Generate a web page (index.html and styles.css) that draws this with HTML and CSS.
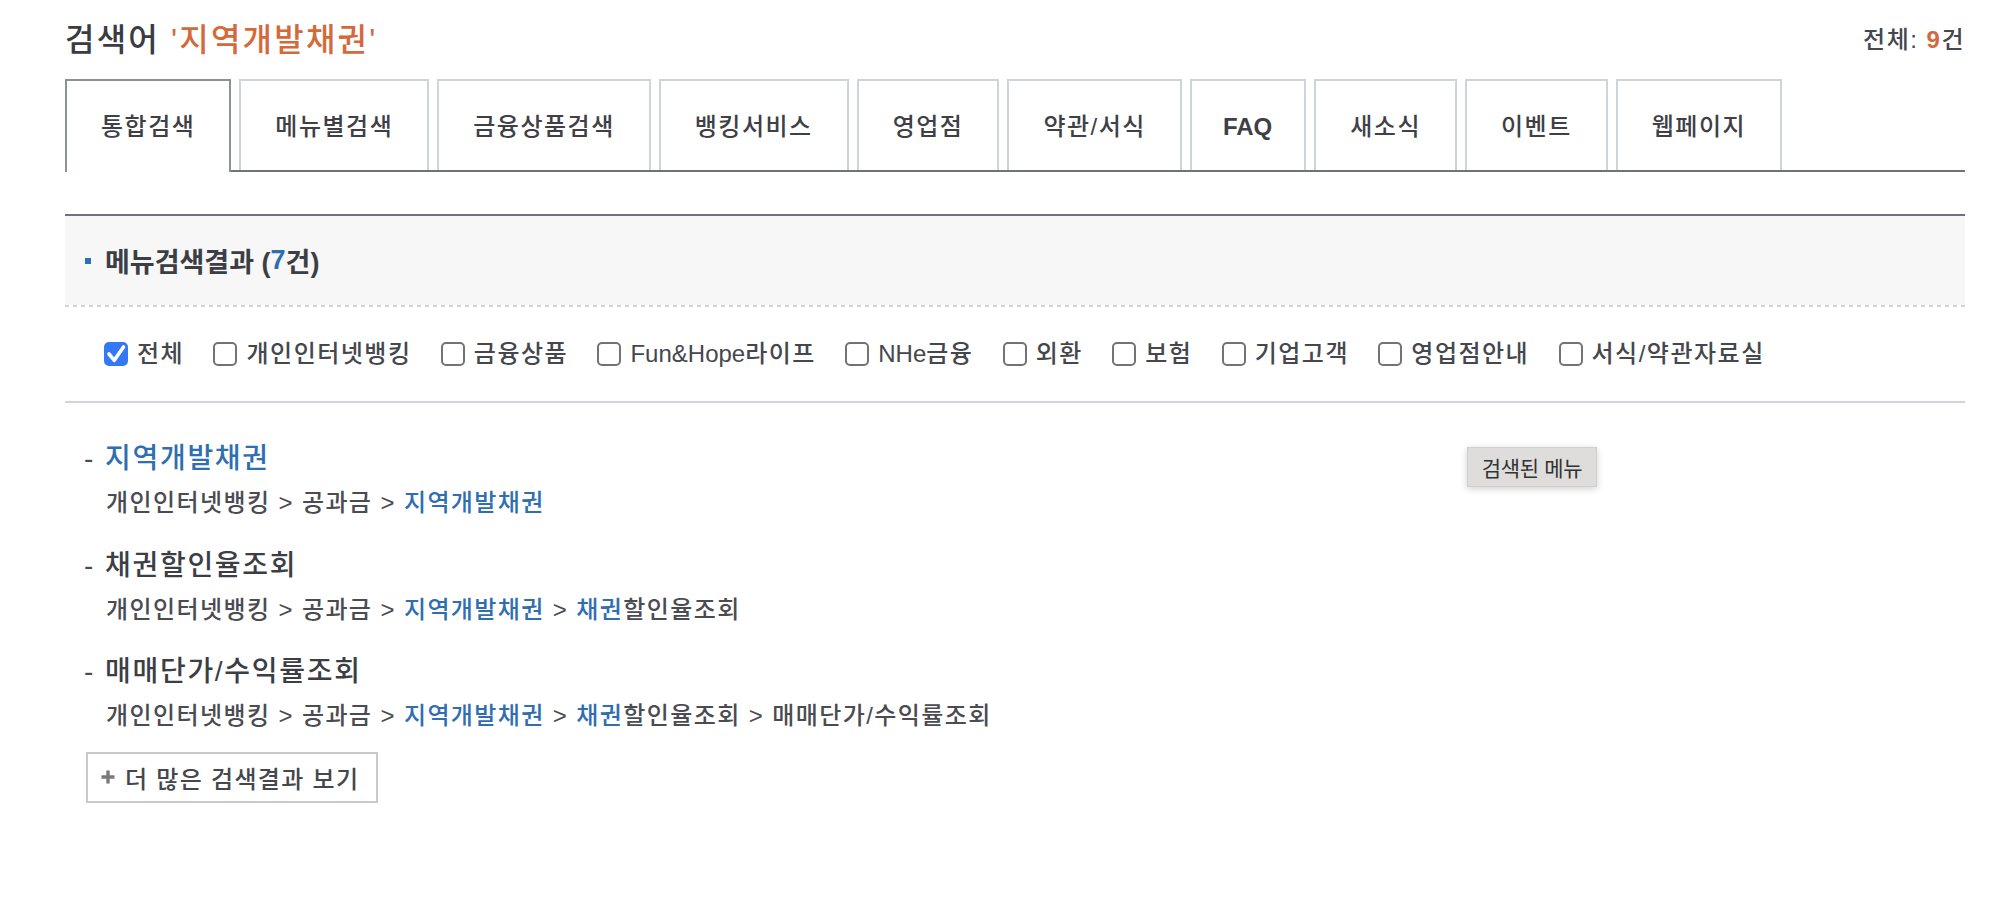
FILE: index.html
```html
<!DOCTYPE html>
<html lang="ko">
<head>
<meta charset="utf-8">
<title>통합검색</title>
<link rel="stylesheet" href="styles.css">
</head>
<body>
<div class="page">
  <div class="head">
    <h1 class="title">검색어 <span class="kw">'지역개발채권'</span></h1>
    <p class="total">전체: <b class="num">9</b>건</p>
  </div>

  <ul class="tabs">
    <li class="tab on">통합검색</li>
    <li class="tab">메뉴별검색</li>
    <li class="tab">금융상품검색</li>
    <li class="tab">뱅킹서비스</li>
    <li class="tab">영업점</li>
    <li class="tab">약관/서식</li>
    <li class="tab latin">FAQ</li>
    <li class="tab">새소식</li>
    <li class="tab">이벤트</li>
    <li class="tab">웹페이지</li>
  </ul>

  <section class="menu-result">
    <h2 class="sec-head"><span class="bullet"></span>메뉴검색결과 (<span class="cnt">7</span>건)</h2>
    <div class="dots"></div>

    <ul class="filters">
      <li class="filter"><span class="cb checked"><svg width="24" height="24" viewBox="0 0 24 24"><path d="M5 12 L10.3 18.3 L19.5 5" fill="none" stroke="#fff" stroke-width="3.6" stroke-linecap="round" stroke-linejoin="round"/></svg></span><span class="lbl">전체</span></li>
      <li class="filter"><span class="cb"></span><span class="lbl">개인인터넷뱅킹</span></li>
      <li class="filter"><span class="cb"></span><span class="lbl">금융상품</span></li>
      <li class="filter"><span class="cb"></span><span class="lbl"><span class="en">Fun&amp;Hope</span>라이프</span></li>
      <li class="filter"><span class="cb"></span><span class="lbl"><span class="en">NHe</span>금융</span></li>
      <li class="filter"><span class="cb"></span><span class="lbl">외환</span></li>
      <li class="filter"><span class="cb"></span><span class="lbl">보험</span></li>
      <li class="filter"><span class="cb"></span><span class="lbl">기업고객</span></li>
      <li class="filter"><span class="cb"></span><span class="lbl">영업점안내</span></li>
      <li class="filter"><span class="cb"></span><span class="lbl">서식/약관자료실</span></li>
    </ul>

    <ul class="results">
      <li class="item">
        <p class="item-title"><a class="link">지역개발채권</a></p>
        <p class="path">개인인터넷뱅킹 &gt; 공과금 &gt; <span class="hl">지역개발채권</span></p>
      </li>
      <li class="item">
        <p class="item-title">채권할인율조회</p>
        <p class="path">개인인터넷뱅킹 &gt; 공과금 &gt; <span class="hl">지역개발채권</span> &gt; <span class="hl">채권</span>할인율조회</p>
      </li>
      <li class="item">
        <p class="item-title">매매단가/수익률조회</p>
        <p class="path">개인인터넷뱅킹 &gt; 공과금 &gt; <span class="hl">지역개발채권</span> &gt; <span class="hl">채권</span>할인율조회 &gt; 매매단가/수익률조회</p>
      </li>
    </ul>

    <button class="more" type="button"><svg class="plus" width="14" height="14" viewBox="0 0 14 14"><path d="M7 0.5V13.5M0.5 7H13.5" stroke="#7a7a7a" stroke-width="3.4"/></svg><span>더 많은 검색결과 보기</span></button>
  </section>

  <div class="tooltip">검색된 메뉴</div>
</div>
</body>
</html>
```

FILE: styles.css
```css
* { box-sizing: border-box; }

html, body {
  margin: 0;
  padding: 0;
  background: #fff;
}

body {
  font-family: "Liberation Sans", "Noto Sans CJK KR", sans-serif;
  font-size: 24px;
  font-weight: 500;
  letter-spacing: 1.5px;
  color: #45474d;
}

h1, h2, p, ul { margin: 0; padding: 0; }
ul { list-style: none; }

.page {
  position: relative;
  width: 2008px;
  padding: 20px 43px 0 65px;
}

/* header */
.head {
  display: flex;
  justify-content: space-between;
  align-items: center;
  height: 40px;
}

.title {
  font-size: 32px;
  font-weight: 500;
  letter-spacing: 2.2px;
  line-height: 40px;
  color: #3a3c42;
}

.kw { color: #d4693b; }

.total {
  font-size: 24px;
  line-height: 40px;
  color: #45474d;
}

.num {
  color: #d4693b;
  font-weight: 700;
}

/* tabs */
.tabs {
  display: flex;
  align-items: flex-end;
  gap: 8px;
  margin-top: 19px;
  border-bottom: 2px solid #6f727b;
}

.tab {
  display: flex;
  align-items: center;
  height: 91px;
  padding: 3px 34px 0;
  border: 2px solid #cfd3da;
  border-bottom: 0;
  background: #fff;
  color: #3e4046;
  line-height: 30px;
  white-space: nowrap;
}

.tab.on {
  height: 93px;
  margin-bottom: -2px;
  padding-bottom: 2px;
  border-color: #8c9099;
}

.tab.latin {
  font-weight: 700;
  letter-spacing: 0;
  padding: 3px 32px 0 31px;
}

/* section */
.menu-result {
  margin-top: 42px;
  border-top: 2px solid #6f727b;
}

.sec-head {
  display: flex;
  align-items: center;
  height: 89px;
  padding-left: 20px;
  background: #f7f7f7;
  font-size: 27px;
  font-weight: 700;
  letter-spacing: 0;
  color: #3c3e45;
}

.bullet {
  width: 6px;
  height: 6px;
  margin-right: 14px;
  background: #2e6fb0;
}

.cnt { color: #2e6fb0; }

.dots {
  height: 2px;
  background: repeating-linear-gradient(90deg, #d3d3d3 0 4px, transparent 4px 8px);
}

/* filters */
.filters {
  display: flex;
  align-items: center;
  height: 96px;
  padding-left: 39px;
  border-bottom: 2px solid #d2d5db;
}

.filter {
  display: flex;
  align-items: center;
  margin-right: 29.3px;
  white-space: nowrap;
}

.cb {
  display: block;
  width: 24px;
  height: 24px;
  margin-right: 9px;
  border: 2px solid #737373;
  border-radius: 5px;
  background: #fff;
}

.cb svg { display: block; margin: -2px; }

.cb.checked {
  border-color: #3478f6;
  background: #3478f6;
}

.lbl { line-height: 30px; color: #45474d; }

.en { letter-spacing: 0; }

/* results */
.results {
  padding-top: 36px;
}

.item { margin-bottom: 26.5px; }

.item-title {
  display: flex;
  padding-left: 19px;
  font-size: 28px;
  line-height: 40px;
  letter-spacing: 1.7px;
  color: #3c3e45;
}

.item-title::before {
  content: "-";
  display: block;
  width: 21px;
  color: #4a4c52;
  letter-spacing: 0;
}

.link { color: #2f6eb0; }

.path {
  margin-top: 8px;
  padding-left: 41px;
  line-height: 32px;
  letter-spacing: 1.4px;
  color: #4a4c52;
}

.hl { color: #2f6eb0; }

.more {
  display: flex;
  align-items: center;
  width: 292px;
  height: 51px;
  margin: -7px 0 0 21px;
  padding: 0 0 0 13px;
  border: 2px solid #c9c9c9;
  background: #fff;
  font-family: inherit;
  font-size: 24px;
  font-weight: 500;
  letter-spacing: 1.3px;
  color: #45474d;
  cursor: pointer;
}

.plus { margin-right: 10px; flex: none; }

/* tooltip */
.tooltip {
  position: absolute;
  left: 1467px;
  top: 447px;
  width: 130px;
  height: 40px;
  display: flex;
  align-items: center;
  justify-content: center;
  background: #dedddb;
  border: 1px solid #cfcfcf;
  box-shadow: 0 2px 7px rgba(0, 0, 0, 0.18);
  font-size: 21px;
  font-weight: 400;
  letter-spacing: -0.3px;
  color: #333;
}
```
